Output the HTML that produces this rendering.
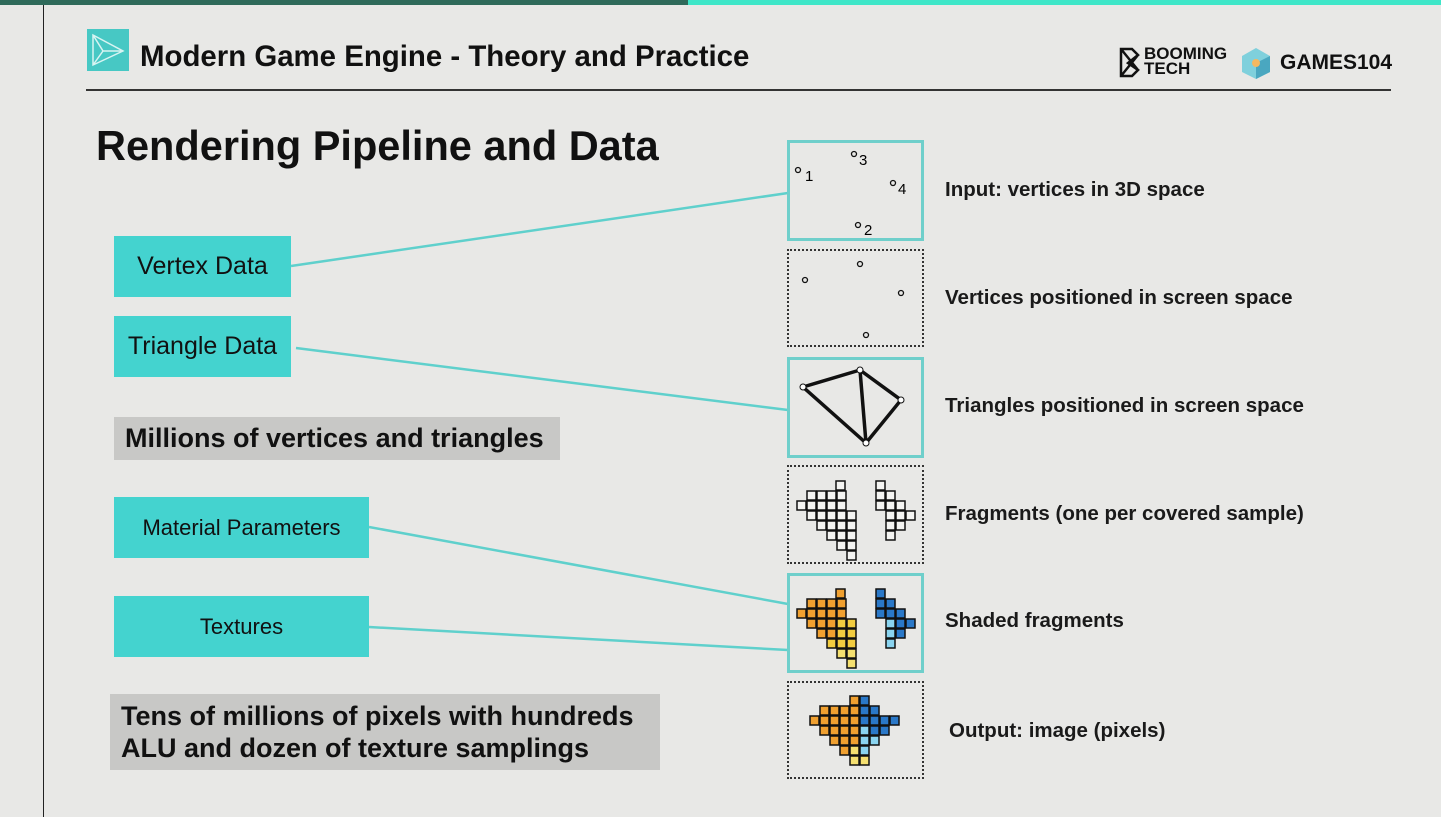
<!DOCTYPE html>
<html><head><meta charset="utf-8"><style>
*{margin:0;padding:0;box-sizing:border-box}
body{width:1441px;height:817px;background:#e8e8e6;position:relative;overflow:hidden;font-family:"Liberation Sans",sans-serif;color:#111}
.a{position:absolute;white-space:nowrap}
.tb{background:#44d3cf;font-size:25px;color:#111;display:flex;align-items:center;justify-content:center}
.gb{background:#c8c8c6;font-weight:bold;font-size:27px;color:#111}
.lbl{font-size:20.5px;font-weight:bold;color:#1a1a1a}
.box{position:absolute;left:787px;width:137px}
.t{border:3px solid #6fcfcb}
.d{border:2px dotted #333}
</style></head><body>
<div class="a" style="left:0;top:0;width:688px;height:5px;background:#2f6a5a"></div>
<div class="a" style="left:688px;top:0;width:753px;height:5px;background:#3ee6c8"></div>
<div class="a" style="left:43px;top:5px;width:1px;height:812px;background:#222"></div>
<div class="a" style="left:87px;top:29px;width:42px;height:42px;background:#47c8c4">
<svg width="42" height="42"><path d="M6 6 L36 22 L6 36 Z M6 6 L16 22 L6 36 M16 22 L36 22" fill="none" stroke="#d8f4f2" stroke-width="1.5"/></svg></div>
<div class="a" style="left:140px;top:40px;font-size:30px;font-weight:bold;transform:scaleX(0.98);transform-origin:left">Modern Game Engine - Theory and Practice</div>
<div class="a" style="left:86px;top:89px;width:1305px;height:1.5px;background:#333"></div>
<div class="a" style="left:1118px;top:46px;width:24px;height:32px"><svg width="24" height="32"><path d="M3 3 H14 L20 9 L10 17 L20 24 L14 30 H3 Z M3 3 L20 24 M3 30 L20 9" fill="none" stroke="#111" stroke-width="2.5"/></svg></div>
<div class="a" style="left:1144px;top:46px;font-size:17px;font-weight:bold;line-height:15px">BOOMING<br>TECH</div>
<div class="a" style="left:1240px;top:46px;width:32px;height:34px"><svg width="32" height="34"><path d="M16 2 L30 10 L30 26 L16 33 L2 26 L2 10 Z" fill="#7fd0dc"/><path d="M16 17 L30 10 L30 26 L16 33 Z" fill="#4aa7c0"/><circle cx="16" cy="17" r="4" fill="#f4b860"/></svg></div>
<div class="a" style="left:1280px;top:51px;font-size:21px;font-weight:900">GAMES104</div>
<div class="a" style="left:96px;top:122px;font-size:41.5px;font-weight:bold">Rendering Pipeline and Data</div>
<div class="a tb" style="left:114px;top:236px;width:177px;height:61px">Vertex Data</div>
<div class="a tb" style="left:114px;top:316px;width:177px;height:61px">Triangle Data</div>
<div class="a gb" style="left:114px;top:417px;width:446px;height:43px;padding:6px 11px">Millions of vertices and triangles</div>
<div class="a tb" style="left:114px;top:497px;width:255px;height:61px;font-size:22px">Material Parameters</div>
<div class="a tb" style="left:114px;top:596px;width:255px;height:61px;font-size:22px">Textures</div>
<div class="a gb" style="left:110px;top:694px;width:550px;height:76px;padding:6px 11px;line-height:32px;white-space:normal">Tens of millions of pixels with hundreds ALU and dozen of texture samplings</div>
<svg class="a" style="left:0;top:0" width="1441" height="817"><g stroke="#5fd0cc" stroke-width="2.5" fill="none">
<line x1="291" y1="266" x2="788" y2="193"/><line x1="296" y1="348" x2="788" y2="410"/>
<line x1="369" y1="527" x2="788" y2="604"/><line x1="369" y1="627" x2="788" y2="650"/></g></svg>
<div class="box t" style="top:140px;height:101px"></div>
<div class="box d" style="top:249px;height:98px"></div>
<div class="box t" style="top:357px;height:101px"></div>
<div class="box d" style="top:465px;height:99px"></div>
<div class="box t" style="top:573px;height:100px"></div>
<div class="box d" style="top:681px;height:98px"></div>
<svg class="a" style="left:0;top:0" width="1441" height="817" font-family="Liberation Sans" font-size="15">
<g fill="none" stroke="#111" stroke-width="1.3">
<circle cx="798" cy="170" r="2.5"/><circle cx="854" cy="154" r="2.5"/><circle cx="893" cy="183" r="2.5"/><circle cx="858" cy="225" r="2.5"/>
<circle cx="805" cy="280" r="2.5"/><circle cx="860" cy="264" r="2.5"/><circle cx="901" cy="293" r="2.5"/><circle cx="866" cy="335" r="2.5"/>
<path d="M803 387 L860 370 L901 400 L866 443 Z M860 370 L866 443" stroke-width="3.5"/>
</g>
<g fill="#fff" stroke="#111"><circle cx="803" cy="387" r="3"/><circle cx="860" cy="370" r="3"/><circle cx="901" cy="400" r="3"/><circle cx="866" cy="443" r="3"/></g>
<text x="805" y="181">1</text><text x="859" y="165">3</text><text x="898" y="194">4</text><text x="864" y="235">2</text>
<defs><rect id="c" width="9" height="9"/></defs>
<g fill="#f4f4f2" stroke="#111" stroke-width="1.5">
<use href="#c" x="836" y="481"/>
<use href="#c" x="807" y="491"/><use href="#c" x="817" y="491"/><use href="#c" x="827" y="491"/><use href="#c" x="837" y="491"/>
<use href="#c" x="797" y="501"/><use href="#c" x="807" y="501"/><use href="#c" x="817" y="501"/><use href="#c" x="827" y="501"/><use href="#c" x="837" y="501"/>
<use href="#c" x="807" y="511"/><use href="#c" x="817" y="511"/><use href="#c" x="827" y="511"/><use href="#c" x="837" y="511"/><use href="#c" x="847" y="511"/>
<use href="#c" x="817" y="521"/><use href="#c" x="827" y="521"/><use href="#c" x="837" y="521"/><use href="#c" x="847" y="521"/>
<use href="#c" x="827" y="531"/><use href="#c" x="837" y="531"/><use href="#c" x="847" y="531"/>
<use href="#c" x="837" y="541"/><use href="#c" x="847" y="541"/><use href="#c" x="847" y="551"/>
<use href="#c" x="876" y="481"/><use href="#c" x="876" y="491"/><use href="#c" x="886" y="491"/>
<use href="#c" x="876" y="501"/><use href="#c" x="886" y="501"/><use href="#c" x="896" y="501"/>
<use href="#c" x="886" y="511"/><use href="#c" x="896" y="511"/><use href="#c" x="906" y="511"/>
<use href="#c" x="886" y="521"/><use href="#c" x="896" y="521"/><use href="#c" x="886" y="531"/>
</g>
<g stroke="#111" stroke-width="1.5">
<g fill="#f0a030">
<use href="#c" x="836" y="589"/>
<use href="#c" x="807" y="599"/><use href="#c" x="817" y="599"/><use href="#c" x="827" y="599"/><use href="#c" x="837" y="599"/>
<use href="#c" x="797" y="609"/><use href="#c" x="807" y="609"/><use href="#c" x="817" y="609"/><use href="#c" x="827" y="609"/><use href="#c" x="837" y="609"/>
<use href="#c" x="807" y="619"/><use href="#c" x="817" y="619"/><use href="#c" x="827" y="619"/>
<use href="#c" x="817" y="629"/><use href="#c" x="827" y="629"/></g>
<g fill="#f2cc40"><use href="#c" x="837" y="619"/><use href="#c" x="847" y="619"/><use href="#c" x="837" y="629"/><use href="#c" x="847" y="629"/>
<use href="#c" x="827" y="639"/><use href="#c" x="837" y="639"/><use href="#c" x="847" y="639"/></g>
<g fill="#f5e070"><use href="#c" x="837" y="649"/><use href="#c" x="847" y="649"/><use href="#c" x="847" y="659"/></g>
<g fill="#2a78c8"><use href="#c" x="876" y="589"/><use href="#c" x="876" y="599"/><use href="#c" x="886" y="599"/>
<use href="#c" x="876" y="609"/><use href="#c" x="886" y="609"/><use href="#c" x="896" y="609"/>
<use href="#c" x="896" y="619"/><use href="#c" x="906" y="619"/><use href="#c" x="896" y="629"/></g>
<g fill="#8ad4f0"><use href="#c" x="886" y="619"/><use href="#c" x="886" y="629"/><use href="#c" x="886" y="639"/></g>
<g fill="#f0a030">
<use href="#c" x="850" y="696"/>
<use href="#c" x="820" y="706"/><use href="#c" x="830" y="706"/><use href="#c" x="840" y="706"/><use href="#c" x="850" y="706"/>
<use href="#c" x="810" y="716"/><use href="#c" x="820" y="716"/><use href="#c" x="830" y="716"/><use href="#c" x="840" y="716"/><use href="#c" x="850" y="716"/>
<use href="#c" x="820" y="726"/><use href="#c" x="830" y="726"/><use href="#c" x="840" y="726"/><use href="#c" x="850" y="726"/>
<use href="#c" x="830" y="736"/><use href="#c" x="840" y="736"/><use href="#c" x="850" y="736"/>
<use href="#c" x="840" y="746"/></g>
<g fill="#2a78c8"><use href="#c" x="860" y="696"/><use href="#c" x="860" y="706"/><use href="#c" x="870" y="706"/>
<use href="#c" x="860" y="716"/><use href="#c" x="870" y="716"/><use href="#c" x="880" y="716"/><use href="#c" x="890" y="716"/>
<use href="#c" x="870" y="726"/><use href="#c" x="880" y="726"/></g>
<g fill="#8ad4f0"><use href="#c" x="860" y="726"/><use href="#c" x="860" y="736"/><use href="#c" x="870" y="736"/><use href="#c" x="860" y="746"/></g>
<g fill="#f5e070"><use href="#c" x="850" y="746"/><use href="#c" x="850" y="756"/><use href="#c" x="860" y="756"/></g>
</g>
</svg>
<div class="a lbl" style="left:945px;top:178px">Input: vertices in 3D space</div>
<div class="a lbl" style="left:945px;top:286px">Vertices positioned in screen space</div>
<div class="a lbl" style="left:945px;top:394px">Triangles positioned in screen space</div>
<div class="a lbl" style="left:945px;top:502px">Fragments (one per covered sample)</div>
<div class="a lbl" style="left:945px;top:609px">Shaded fragments</div>
<div class="a lbl" style="left:949px;top:719px">Output: image (pixels)</div>
</body></html>
